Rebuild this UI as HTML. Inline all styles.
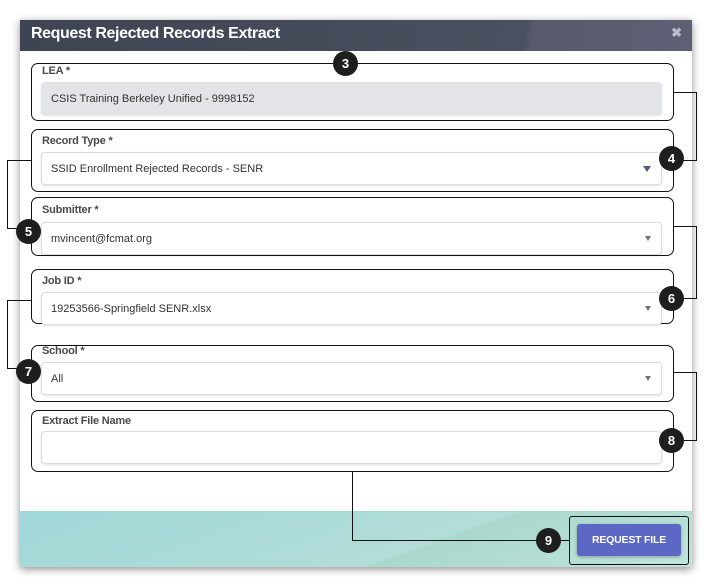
<!DOCTYPE html>
<html><head><style>
*{box-sizing:border-box;margin:0;padding:0}
body{width:712px;height:587px;background:#fff;position:relative;overflow:hidden;font-family:"Liberation Sans",sans-serif}
.abs{position:absolute}
.dlg{left:20px;top:20px;width:672px;height:547px;background:#fff;box-shadow:0 2px 8px rgba(0,0,0,.45)}
.hdr{left:20px;top:20px;width:672px;height:31px;background:linear-gradient(100deg,#3e4451 0%,#4b5060 75%,#575a6c 76%,#5e6075 100%)}
.hdr span{position:absolute;left:11px;top:5px;color:#fff;font-size:16px;font-weight:bold;letter-spacing:-0.4px}
.x{right:10px;top:5px;color:#b9bcc6;font-size:13px;font-weight:bold}
.ftr{left:20px;top:511px;width:672px;height:56px;background:linear-gradient(160deg,#9fd8d8 0%,#b3ddd8 60%,#aad8cd 61%,#c0e4dc 100%);border-top:1px solid #a5d6d2}
.box{border:1px solid #111;border-radius:7px}
.lbl{font-size:11px;color:#4a4a4a;font-weight:bold;letter-spacing:-0.2px}
.inp{border:1px solid #ddd;border-radius:4px;background:#fff;box-shadow:0 1px 2px rgba(0,0,0,.12);font-size:11px;color:#333;padding:0 9px;display:flex;align-items:center}
.arr{position:absolute;right:10px;top:13px;width:0;height:0;border-left:3px solid transparent;border-right:3px solid transparent;border-top:5px solid #6c7480}
.c{width:25px;height:25px;border-radius:50%;background:#1e1e1e;color:#fff;font-weight:bold;font-size:13px;display:flex;align-items:center;justify-content:center}
.ln{background:#111}
</style></head><body>
<div class="abs dlg"></div>
<div class="abs hdr"><span>Request Rejected Records Extract</span><div class="abs x">✖</div></div>
<div class="abs ftr"></div>

<div class="abs box" style="left:31px;top:63px;width:643px;height:58px"></div>
<div class="abs lbl" style="left:42px;top:65px">LEA *</div>
<div class="abs inp" style="left:41px;top:82px;width:621px;height:33px;background:#e3e4e8;border-color:#e3e4e8">CSIS Training Berkeley Unified - 9998152</div>

<div class="abs box" style="left:31px;top:129px;width:643px;height:63px"></div>
<div class="abs lbl" style="left:42px;top:135px">Record Type *</div>
<div class="abs inp" style="left:41px;top:152px;width:621px;height:33px">SSID Enrollment Rejected Records - SENR<div class="arr" style="border-top-color:#4b5d7a;border-left-width:4px;border-right-width:4px;border-top-width:6px"></div></div>

<div class="abs box" style="left:31px;top:197px;width:643px;height:59px"></div>
<div class="abs lbl" style="left:42px;top:204px">Submitter *</div>
<div class="abs inp" style="left:41px;top:222px;width:621px;height:33px">mvincent@fcmat.org<div class="arr"></div></div>

<div class="abs box" style="left:31px;top:269px;width:643px;height:55px"></div>
<div class="abs lbl" style="left:42px;top:275px">Job ID *</div>
<div class="abs inp" style="left:41px;top:292px;width:621px;height:33px">19253566-Springfield SENR.xlsx<div class="arr"></div></div>

<div class="abs box" style="left:31px;top:345px;width:643px;height:57px"></div>
<div class="abs lbl" style="left:42px;top:345px">School *</div>
<div class="abs inp" style="left:41px;top:362px;width:621px;height:33px">All<div class="arr"></div></div>

<div class="abs box" style="left:31px;top:410px;width:643px;height:62px"></div>
<div class="abs lbl" style="left:42px;top:415px">Extract File Name</div>
<div class="abs inp" style="left:41px;top:431px;width:621px;height:33px"></div>

<div class="abs ln" style="left:674px;top:92px;width:23px;height:1px"></div>
<div class="abs ln" style="left:696px;top:92px;width:1px;height:69px"></div>
<div class="abs ln" style="left:683px;top:160px;width:14px;height:1px"></div>

<div class="abs ln" style="left:7px;top:160px;width:24px;height:1px"></div>
<div class="abs ln" style="left:7px;top:160px;width:1px;height:69px"></div>
<div class="abs ln" style="left:7px;top:228px;width:10px;height:1px"></div>

<div class="abs ln" style="left:674px;top:226px;width:23px;height:1px"></div>
<div class="abs ln" style="left:696px;top:226px;width:1px;height:73px"></div>
<div class="abs ln" style="left:683px;top:298px;width:14px;height:1px"></div>

<div class="abs ln" style="left:7px;top:300px;width:24px;height:1px"></div>
<div class="abs ln" style="left:7px;top:300px;width:1px;height:69px"></div>
<div class="abs ln" style="left:7px;top:368px;width:10px;height:1px"></div>

<div class="abs ln" style="left:674px;top:372px;width:23px;height:1px"></div>
<div class="abs ln" style="left:696px;top:372px;width:1px;height:69px"></div>
<div class="abs ln" style="left:683px;top:440px;width:14px;height:1px"></div>

<div class="abs ln" style="left:352px;top:472px;width:1px;height:69px"></div>
<div class="abs ln" style="left:352px;top:540px;width:185px;height:1px"></div>
<div class="abs ln" style="left:560px;top:540px;width:10px;height:1px"></div>

<div class="abs box" style="left:569px;top:516px;width:120px;height:49px;border-radius:3px"></div>
<div class="abs" style="left:577px;top:524px;width:104px;height:32px;background:#5d68c4;border-radius:3px;box-shadow:0 1px 3px rgba(0,0,0,.3);color:#fff;font-size:10.5px;font-weight:bold;letter-spacing:-0.2px;display:flex;align-items:center;justify-content:center">REQUEST FILE</div>

<div class="abs c" style="left:333px;top:51px">3</div>
<div class="abs c" style="left:659px;top:146px">4</div>
<div class="abs c" style="left:16px;top:219px">5</div>
<div class="abs c" style="left:659px;top:286px">6</div>
<div class="abs c" style="left:16px;top:359px">7</div>
<div class="abs c" style="left:659px;top:428px">8</div>
<div class="abs c" style="left:536px;top:528px">9</div>
</body></html>
